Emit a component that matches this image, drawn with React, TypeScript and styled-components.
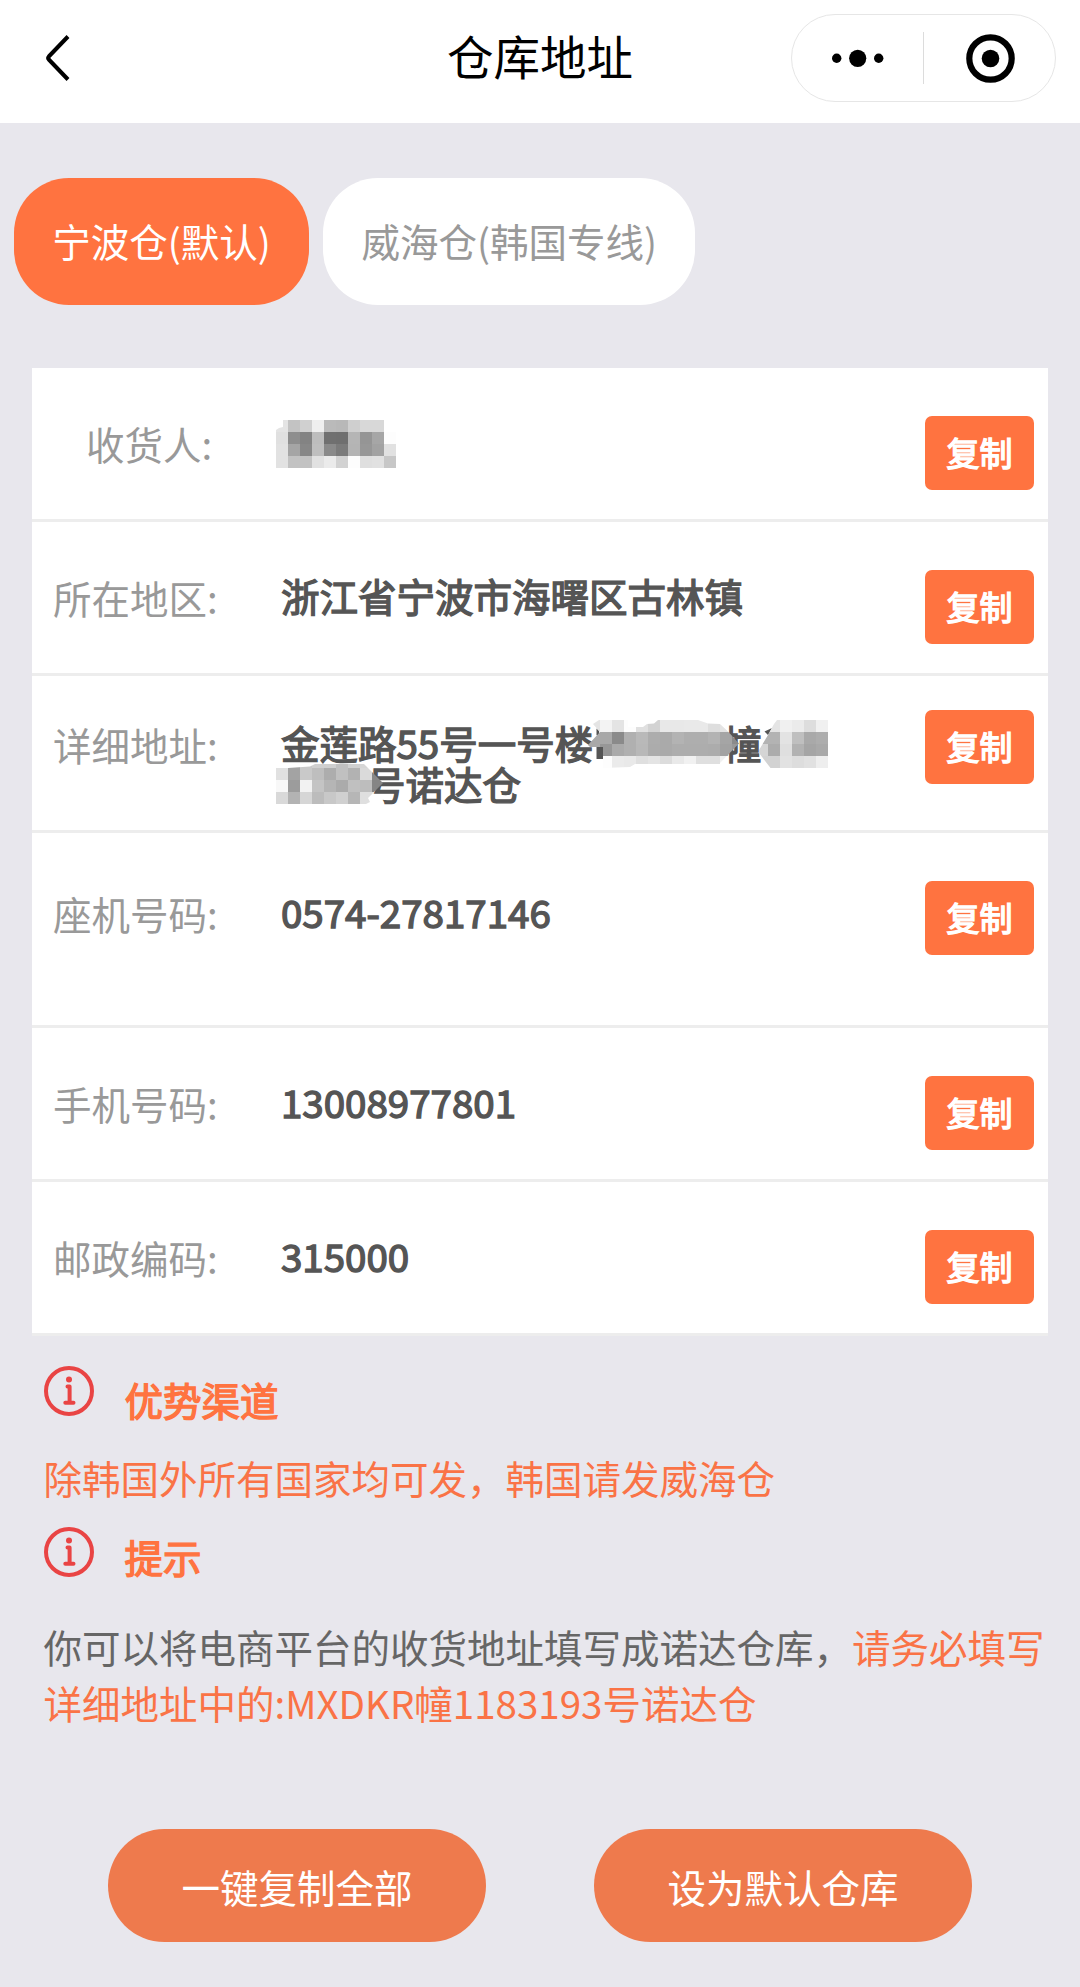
import React from 'react';
import styled, { createGlobalStyle } from 'styled-components';

const GlobalStyle = createGlobalStyle`
  * { box-sizing: border-box; }
  body {
    margin: 0;
    background: #e8e7ed;
    font-family: "Noto Sans CJK SC", "Noto Sans", sans-serif;
    font-size: 38.5px;
  }
  button {
    margin: 0;
    padding: 0;
    border: 0;
    background: none;
    font: inherit;
    color: inherit;
  }
`;

const Page = styled.div`
  width: 1080px;
  height: 1987px;
  overflow: hidden;
  display: flex;
  flex-direction: column;
  background: #e8e7ed;
`;

const Header = styled.header`
  height: 123px;
  padding: 14px 24px 0 46px;
  display: grid;
  grid-template-columns: 1fr auto 1fr;
  align-items: start;
  background: #fff;
`;

const BackButton = styled.button`
  width: 24px;
  height: 88px;
  display: flex;
  align-items: center;
`;

const Title = styled.h1`
  margin: 0;
  padding-right: 22px;
  font-size: 46.5px;
  font-weight: 400;
  line-height: 82px;
  color: #000;
`;

const Capsule = styled.div`
  justify-self: end;
  width: 265px;
  height: 88px;
  border: 1px solid #e6e6e6;
  border-radius: 44px;
  display: flex;
  align-items: center;
`;

const CapsuleButton = styled.button`
  flex: 1;
  height: 100%;
  display: flex;
  align-items: center;
  justify-content: center;
`;

const CapsuleDivider = styled.span`
  width: 1px;
  height: 52px;
  background: #dcdcdc;
`;

const Tabs = styled.nav`
  display: flex;
  gap: 14px;
  padding: 55px 14px 0;
`;

const Tab = styled.button<{ $active?: boolean }>`
  height: 127px;
  padding: 0 38.3px 3px;
  border-radius: 55px;
  white-space: nowrap;
  background: ${(p) => (p.$active ? '#ff7340' : '#fff')};
  color: ${(p) => (p.$active ? '#fff' : '#999')};
`;

const Card = styled.section`
  margin: 63px 32px 0;
  background: #fff;
`;

const Row = styled.div<{ $height: number; $shift: number }>`
  height: ${(p) => p.$height}px;
  padding: 48px 14px 0 21px;
  border-bottom: 3px solid #ededed;
  display: grid;
  grid-template-columns: 228px 1fr 109px;
  align-items: start;

  & > :not(button) {
    margin-top: ${(p) => p.$shift}px;
  }
`;

const Label = styled.span<{ $indent?: number }>`
  padding-left: ${(p) => p.$indent ?? 0}px;
  line-height: 54px;
  color: #999;
`;

const Value = styled.span`
  padding-top: 5px;
  line-height: 41px;
  color: #555;
  white-space: nowrap;
  -webkit-text-stroke: 1.4px #555;
`;

const ValueLine = styled.span`
  display: flex;
  height: 41px;
`;

const CopyButton = styled.button<{ $lift?: number }>`
  width: 109px;
  height: 74px;
  margin-top: ${(p) => -(p.$lift ?? 0)}px;
  padding-bottom: 2px;
  border-radius: 7px;
  background: #ff7340;
  color: #fff;
  font-size: 33px;
  -webkit-text-stroke: 1.4px #fff;
`;

const MosaicSvg = styled.svg<{ $left: number; $right: number; $top: number }>`
  flex: none;
  position: relative;
  z-index: 1;
  overflow: visible;
  margin: ${(p) => `${p.$top}px ${p.$right}px 0 ${p.$left}px`};
`;

const Notes = styled.section`
  padding: 0 30px 0 43.5px;
  display: flex;
  flex-direction: column;
`;

const NoteHeading = styled.h2<{ $top: number; $drop: number }>`
  height: 50px;
  margin: ${(p) => p.$top}px 0 0;
  display: flex;
  gap: 31px;
  font-size: inherit;
  font-weight: 400;
  line-height: 50px;
  color: #ff7340;
  -webkit-text-stroke: 1.4px #ff7340;

  span {
    padding-top: ${(p) => p.$drop}px;
  }
`;

const NoteText = styled.p<{ $top: number }>`
  margin: ${(p) => p.$top}px 0 0;
  line-height: 56px;
  color: #666;
  white-space: nowrap;
`;

const Accent = styled.span`
  color: #fa7346;
`;

const Actions = styled.footer`
  margin-top: 99px;
  padding: 0 108px;
  display: flex;
  justify-content: space-between;
`;

const ActionButton = styled.button`
  width: 378px;
  height: 113px;
  border-radius: 57px;
  background: #ee7a4d;
  color: #fff;
`;

type Cell = [x: number, y: number, w: number, h: number, shade: string];

/* Expands rows of two-digit grey levels into 12px mosaic cells. */
const cells = (x: number, y: number, rows: string[]): Cell[] =>
  rows.flatMap((row, r) =>
    row.split(' ').flatMap((g, c): Cell[] =>
      g === '--' ? [] : [[x + c * 12, y + r * 12, 12, 12, `#${g}${g}${g}`]],
    ),
  );

interface MosaicProps {
  id: string;
  width: number;
  height: number;
  outline: string;
  data: Cell[];
  left?: number;
  right?: number;
  top?: number;
  scraps?: string[];
}

const Mosaic = ({ id, width, height, outline, data, left = 0, right = 0, top = 0, scraps = [] }: MosaicProps) => (
  <MosaicSvg
    width={width}
    height={height}
    viewBox={`0 0 ${width} ${height}`}
    $left={left}
    $right={right}
    $top={top}
    stroke="none"
    aria-hidden
  >
    <clipPath id={id}>
      <polygon points={outline} />
    </clipPath>
    {scraps.map((points) => (
      <polygon key={points} points={points} fill="#555" />
    ))}
    <g clipPath={`url(#${id})`} shapeRendering="crispEdges">
      {data.map(([x, y, w, h, fill]) => (
        <rect key={`${x}-${y}`} x={x} y={y} width={w} height={h} fill={fill} />
      ))}
    </g>
  </MosaicSvg>
);

const NameMosaic = () => (
  <Mosaic
    id="name"
    width={120}
    height={48}
    left={-5}
    top={-1}
    outline="7,0 120,0 120,48 0,48 0,10 3,8 7,7"
    data={cells(0, 0, [
      'e4 c3 d0 ef ba b8 cf d8 d8 --',
      'e0 8e 83 bd 70 6f b5 95 a6 fd',
      'e2 a5 87 bf 8a 7b b4 97 a2 e1',
      'e2 c2 c2 e1 eb d2 fd df e1 c7',
    ])}
  />
);

const BuildingMosaic = () => (
  <Mosaic
    id="building"
    width={151}
    height={48}
    left={-5}
    right={-16.5}
    top={-2}
    outline="5,4 11,0 40,0 40,7 55,7 59,4 66,3.5 70,0 110,0 120,3.5 132,4 140,11.5 151,23.5 132,43 132,44 47,44 42,47 15,48 15,27 2,27 0,25 12,12"
    scraps={['8.5,8.5 11,11 11,17 8.5,15', '8.5,26 15,26 15,39 8.5,39']}
    data={cells(0, 0, [
      'e4 f3 e4 fd e0 d3 e8 e8 e9 e9 de e4 e0',
      'a9 a8 8a b0 b9 ad aa b3 ae ae b3 a5 8b',
      'a9 97 aa b0 b8 ac aa ad ad ad ac a2 98',
      '-- fd eb e9 df e4 dc e9 f1 df df f0 --',
    ])}
  />
);

const UnitMosaic = () => (
  <Mosaic
    id="unit"
    width={70}
    height={48}
    left={-3}
    top={-2}
    outline="19,0 70,0 70,48 12.5,48 1,33 1,30 10,15 16,4"
    scraps={['6.5,11.5 14,8 10,15']}
    data={cells(-2, 0, [
      'e4 e4 f0 eb dd f0',
      'b3 b3 e3 bf a9 ad',
      'd5 ac df b2 a5 a9',
      'd2 d2 e2 dd e1 ee',
    ])}
  />
);

const RoomMosaic = () => (
  <Mosaic
    id="room"
    width={107}
    height={40}
    left={-5}
    right={-16}
    top={1}
    outline="0,4 12,4 34,2.5 39,0 88,0 96,8 107,19 92,34 94,38 90,40 0,40"
    data={[
      ...cells(0, -8, ['e1 a3 c9 d0 cf c0 d0 d6 --']),
      ...cells(0, 4, [
        'e1 a3 c9 be ad c0 b2 da 88',
        'f8 9c f2 c4 b5 ab c0 bd 85',
        'd9 b3 d6 bc c8 d0 b6 df e0',
      ]),
    ]}
  />
);

const InfoIcon = () => (
  <svg width="50" height="50" viewBox="0 0 50 50" fill="none" stroke="#e94444" strokeLinecap="round" strokeLinejoin="round">
    <circle cx="25" cy="25" r="23" strokeWidth="4" />
    <circle cx="25" cy="13.5" r="3" fill="#e94444" stroke="none" />
    <path d="M23.5 20.5h2.1v16M21.3 36.8h8.2" strokeWidth="4" />
  </svg>
);

const rows: { label: string; indent?: number; height: number; shift?: number; lift?: number; value: React.ReactNode }[] = [
  { label: '收货人:', indent: 33, height: 154, value: <NameMosaic /> },
  { label: '所在地区:', height: 154, value: '浙江省宁波市海曙区古林镇' },
  {
    label: '详细地址:',
    height: 157,
    shift: -7,
    lift: 14,
    value: (
      <>
        <ValueLine>
          金莲路55号一号楼
          <BuildingMosaic />幢<UnitMosaic />
        </ValueLine>
        <ValueLine>
          <RoomMosaic />
          号诺达仓
        </ValueLine>
      </>
    ),
  },
  { label: '座机号码:', height: 195, shift: 5, value: '0574-27817146' },
  { label: '手机号码:', height: 154, value: '13008977801' },
  { label: '邮政编码:', height: 154, value: '315000' },
];

export default function App() {
  return (
    <>
      <GlobalStyle />
      <Page>
        <Header>
          <BackButton aria-label="返回">
            <svg width="24" height="46" viewBox="0 0 24 46" fill="none" stroke="#000" strokeWidth="4" strokeLinejoin="round">
              <path d="M22 1.5 2.8 21.5q-1.3 1.5 0 3L22 44.5" />
            </svg>
          </BackButton>
          <Title>仓库地址</Title>
          <Capsule>
            <CapsuleButton aria-label="更多">
              <svg width="52" height="18" viewBox="0 0 52 18">
                <circle cx="4.7" cy="9.3" r="4.7" />
                <circle cx="25.7" cy="9.3" r="8.6" />
                <circle cx="46.7" cy="9.3" r="4.7" />
              </svg>
            </CapsuleButton>
            <CapsuleDivider />
            <CapsuleButton aria-label="关闭">
              <svg width="50" height="50" viewBox="0 0 50 50">
                <circle cx="25.5" cy="25.5" r="21.2" fill="none" stroke="#000" strokeWidth="6.2" />
                <circle cx="25.5" cy="25.5" r="8.8" />
              </svg>
            </CapsuleButton>
          </Capsule>
        </Header>

        <Tabs>
          <Tab $active>宁波仓(默认)</Tab>
          <Tab>威海仓(韩国专线)</Tab>
        </Tabs>

        <Card>
          {rows.map((row) => (
            <Row key={row.label} $height={row.height} $shift={row.shift ?? 0}>
              <Label $indent={row.indent}>{row.label}</Label>
              <Value>{row.value}</Value>
              <CopyButton $lift={row.lift}>复制</CopyButton>
            </Row>
          ))}
        </Card>

        <Notes>
          <NoteHeading $top={29.5} $drop={8}>
            <InfoIcon />
            <span>优势渠道</span>
          </NoteHeading>
          <NoteText $top={33.5}>
            <Accent>除韩国外所有国家均可发，韩国请发威海仓</Accent>
          </NoteText>
          <NoteHeading $top={22} $drop={4}>
            <InfoIcon />
            <span>提示</span>
          </NoteHeading>
          <NoteText $top={41}>
            你可以将电商平台的收货地址填写成诺达仓库，
            <Accent>
              请务必填写
              <br />
              详细地址中的:MXDKR幢1183193号诺达仓
            </Accent>
          </NoteText>
        </Notes>

        <Actions>
          <ActionButton>一键复制全部</ActionButton>
          <ActionButton>设为默认仓库</ActionButton>
        </Actions>
      </Page>
    </>
  );
}
